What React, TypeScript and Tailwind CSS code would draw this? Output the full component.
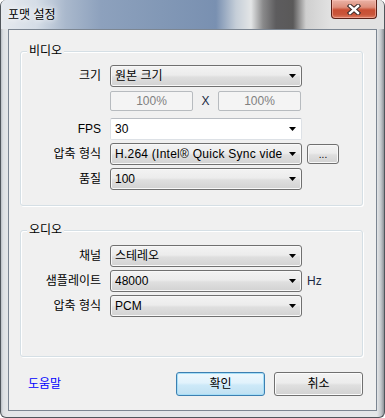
import React from "react";

function Arrow() {
  return (
    <svg width="7" height="4" viewBox="0 0 7 4" className="shrink-0">
      <polygon points="0,0 7,0 3.5,4" fill="#000" />
    </svg>
  );
}

function Combo({ text, wide }: { text: string; wide?: boolean }) {
  return (
    <div className="flex h-[22px] w-[192px] shrink-0 items-center rounded-[3px] border border-[#707070] bg-[linear-gradient(180deg,#f3f3f3_0%,#ececec_45%,#dfdfdf_55%,#d2d2d2_100%)] pl-[4px] pr-[5px] shadow-[inset_0_0_0_1px_#f8f8f8]">
      <span
        className={`mr-[7px] min-w-0 flex-1 overflow-hidden whitespace-nowrap leading-[16px] ${wide ? "tracking-[0.25px]" : ""}`}
      >
        {text}
      </span>
      <Arrow />
    </div>
  );
}

function Edit({ text }: { text: string }) {
  return (
    <div className="flex h-[22px] w-[192px] shrink-0 items-center rounded-[2px] border border-[#dde1e6] border-t-[#b9bdc3] bg-white pl-[4px] pr-[5px]">
      <span className="flex-1 leading-[16px]">{text}</span>
      <Arrow />
    </div>
  );
}

function Pct() {
  return (
    <div className="flex h-[20px] w-[83px] items-center justify-center rounded-[2px] border border-[#b7bbbf] bg-[#f4f4f4] text-[#808080]">
      100%
    </div>
  );
}

function Label({ text }: { text: string }) {
  return <div className="w-[80px] shrink-0 text-right leading-[16px]">{text}</div>;
}

function Group({ title, h, children }: { title: string; h: string; children: React.ReactNode }) {
  return (
    <div
      className={`relative ml-[11px] w-[343px] rounded-[3px] border border-[#d5dfe5] shadow-[inset_1px_1px_0_#ffffff,1px_1px_0_#ffffff] ${h}`}
    >
      <div className="absolute -top-[9px] left-[6px] bg-[#f0f0f0] px-[2px] leading-[16px]">{title}</div>
      {children}
    </div>
  );
}

export default function App() {
  return (
    <div className="flex h-[418px] w-[385px] flex-col overflow-hidden rounded-[6px] border-x border-b border-[#50565c] bg-[linear-gradient(90deg,#b9bec4_0px,#dcdfe2_2px,#e4e6e8_6px,#e4e6e8_376px,#c3c7cb_380px,#8e9298_383px)] font-['Liberation_Sans','Noto_Sans_CJK_KR',sans-serif] text-[12px] text-black">
      {/* Title bar */}
      <div className="flex h-[29px] shrink-0 items-start bg-[linear-gradient(90deg,#e6eaef_0px,#d5dde7_35px,#a9b8cc_65px,#8da1bd_100px,#8298b6_160px,#7990b1_215px,#c5ced8_235px,#e3e5e6_250px,#8a8a8b_262px,#5d5c5e_275px,#5a5959_292px,#cfcfcf_305px,#e2e2e2_330px)]">
        <div className="pl-[7px] pt-[7px] leading-[16px] [text-shadow:0_0_5px_#ffffff,0_0_8px_#ffffff]">포맷 설정</div>
        <div className="ml-auto mr-[7px] flex h-[19px] w-[46px] items-center justify-center rounded-b-[4px] border border-t-0 border-[#5a2118] bg-[linear-gradient(180deg,#eab3a6_0%,#de8f7c_40%,#c94f34_55%,#c9553a_80%,#dd7d62_100%)] shadow-[inset_0_0_0_1px_rgba(255,200,190,0.5)]">
          <svg width="14" height="11" viewBox="0 0 14 11">
            <path d="M3 2 L11 9 M11 2 L3 9" stroke="#3b2a28" strokeWidth="4.4" strokeLinecap="square" />
            <path d="M3 2 L11 9 M11 2 L3 9" stroke="#ffffff" strokeWidth="2.4" strokeLinecap="square" />
          </svg>
        </div>
      </div>

      {/* Body */}
      <div className="flex flex-1 flex-col px-[7px] pb-[6px]">
        <div className="flex flex-1 flex-col border border-[#7c8692] bg-[#f0f0f0]">
          <div className="mt-[21px]">
            <Group title="비디오" h="h-[155px]">
              <div className="flex flex-col pt-[13px]">
                <div className="flex items-center">
                  <Label text="크기" />
                  <div className="ml-[9px]">
                    <Combo text="원본 크기" />
                  </div>
                </div>
                <div className="mt-[4px] flex items-center pl-[89px]">
                  <Pct />
                  <div className="w-[25px] text-center leading-[16px] text-[#1b2a44]">X</div>
                  <Pct />
                </div>
                <div className="mt-[7px] flex items-center">
                  <Label text="FPS" />
                  <div className="ml-[9px]">
                    <Edit text="30" />
                  </div>
                </div>
                <div className="mt-[3px] flex items-center">
                  <Label text="압축 형식" />
                  <div className="ml-[9px]">
                    <Combo text="H.264 (Intel® Quick Sync video" wide />
                  </div>
                  <div className="ml-[5px] flex h-[20px] w-[32px] items-center justify-center rounded-[3px] border border-[#707070] bg-[linear-gradient(180deg,#f3f3f3_0%,#ececec_45%,#dfdfdf_55%,#d2d2d2_100%)] pt-[2px] text-[10px] leading-[10px] shadow-[inset_0_0_0_1px_#f8f8f8]">
                    ...
                  </div>
                </div>
                <div className="mt-[3px] flex items-center">
                  <Label text="품질" />
                  <div className="ml-[9px]">
                    <Combo text="100" />
                  </div>
                </div>
              </div>
            </Group>
          </div>

          <div className="mt-[24px]">
            <Group title="오디오" h="h-[127px]">
              <div className="flex flex-col gap-[3px] pt-[14px]">
                <div className="flex items-center">
                  <Label text="채널" />
                  <div className="ml-[9px]">
                    <Combo text="스테레오" />
                  </div>
                </div>
                <div className="flex items-center">
                  <Label text="샘플레이트" />
                  <div className="ml-[9px]">
                    <Combo text="48000" />
                  </div>
                  <div className="ml-[5px] leading-[16px] text-[#1b2a44]">Hz</div>
                </div>
                <div className="flex items-center">
                  <Label text="압축 형식" />
                  <div className="ml-[9px]">
                    <Combo text="PCM" />
                  </div>
                </div>
              </div>
            </Group>
          </div>

          <div className="mt-[15px] flex h-[24px] items-center">
            <div className="ml-[19px] leading-[16px] text-[#0000ff]">도움말</div>
            <div className="ml-auto mr-[13px] flex gap-[9px]">
              <div className="flex h-[24px] w-[89px] items-center justify-center rounded-[3px] border border-[#3c7fb1] bg-[linear-gradient(180deg,#eef8fd_0%,#e1f2fc_45%,#cde9f8_55%,#bfe0f2_100%)] leading-[16px] shadow-[inset_0_0_0_1px_#a6def7]">
                확인
              </div>
              <div className="flex h-[24px] w-[89px] items-center justify-center rounded-[3px] border border-[#707070] bg-[linear-gradient(180deg,#f3f3f3_0%,#ececec_45%,#dfdfdf_55%,#d2d2d2_100%)] leading-[16px] shadow-[inset_0_0_0_1px_#fbfbfb]">
                취소
              </div>
            </div>
          </div>
        </div>
      </div>
    </div>
  );
}
